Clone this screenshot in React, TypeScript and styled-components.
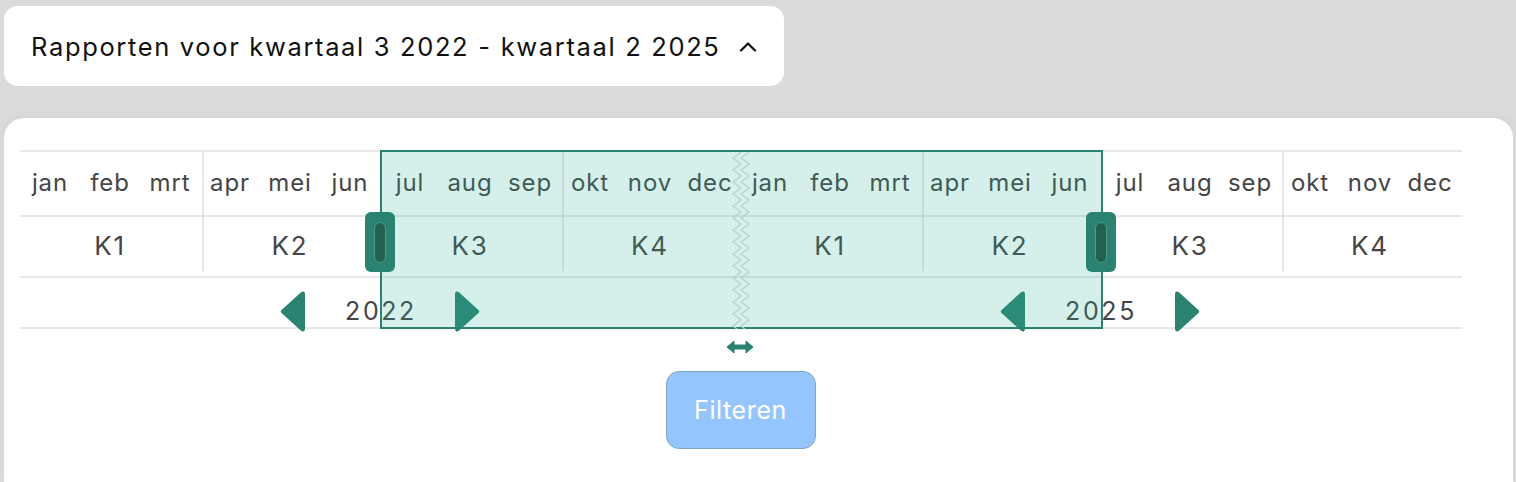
import styled, { createGlobalStyle } from 'styled-components';

const TEAL = '#2a8371';
const LINE = '#e7e7ec';
const TEXT = '#454545';

const GlobalStyle = createGlobalStyle`
  html, body { margin: 0; padding: 0; }
  body {
    background: #dbdbdd;
    font-family: Inter, "Noto Sans", sans-serif;
  }
`;

const Page = styled.div`
  height: 482px;
  box-sizing: border-box;
  padding: 6px 3px 0 4px;
  display: flex;
  flex-direction: column;
  overflow: hidden;
`;

const Trigger = styled.button`
  width: 780px;
  height: 80px;
  flex-shrink: 0;
  display: flex;
  align-items: center;
  gap: 18px;
  padding: 0 0 0 27px;
  border: none;
  border-radius: 14px;
  background: #fff;
  font-family: Inter, sans-serif;
  font-size: 25.5px;
  letter-spacing: 1.65px;
  color: #111;
  cursor: pointer;
`;

const Dash = styled.span`
  margin: 0 9px;
`;

const Panel = styled.div`
  flex: 1;
  margin-top: 32px;
  background: #fff;
  border-radius: 20px 20px 0 0;
  padding: 32px 0 0 16px;
  display: flex;
  flex-direction: column;
  align-items: flex-start;
  box-shadow: 0 -2px 10px rgba(0, 0, 0, 0.04);
`;

const Timeline = styled.div`
  position: relative;
  width: 1442px;
  border-top: 2px solid ${LINE};
`;

const Row = styled.div<{ $height: number }>`
  display: flex;
  height: ${(p) => p.$height}px;
  border-bottom: 2px solid ${LINE};
`;

const QuarterMonths = styled.div<{ $divider: boolean }>`
  width: 180px;
  display: flex;
  background: ${(p) =>
    p.$divider ? `linear-gradient(${LINE}, ${LINE}) 2px 0 / 2px 100% no-repeat` : 'none'};
`;

const Month = styled.span`
  width: 60px;
  display: flex;
  align-items: center;
  justify-content: center;
  padding-bottom: 3px;
  font-size: 24px;
  letter-spacing: 0.9px;
  color: ${TEXT};
`;

const QuarterCell = styled.div<{ $divider: boolean }>`
  width: 180px;
  display: flex;
  align-items: center;
  justify-content: center;
  padding-bottom: 2px;
  font-size: 26px;
  letter-spacing: 1.8px;
  color: ${TEXT};
  background: ${(p) =>
    p.$divider
      ? `linear-gradient(${LINE}, ${LINE}) 2px 0 / 2px calc(100% - 5px) no-repeat`
      : 'none'};
`;

const YearCell = styled.div`
  width: 720px;
  display: flex;
  align-items: center;
  justify-content: center;
  gap: 40px;
`;

const YearLabel = styled.span`
  font-size: 25px;
  letter-spacing: 2.6px;
  color: ${TEXT};
  padding-top: 16px;
  margin-right: -2px;
`;

const ArrowButton = styled.button`
  padding: 0;
  border: none;
  background: none;
  display: flex;
  margin-top: 18px;
  cursor: pointer;
`;

const Selection = styled.div`
  position: absolute;
  left: 360px;
  top: -2px;
  width: 723px;
  height: 179px;
  box-sizing: border-box;
  border: 2px solid ${TEAL};
  background: rgba(45, 180, 150, 0.2);
`;

const Handle = styled.div<{ $left: number }>`
  position: absolute;
  left: ${(p) => p.$left}px;
  top: 60px;
  width: 30px;
  height: 60px;
  box-sizing: border-box;
  border-radius: 6px;
  background: ${TEAL};
  padding: 10px 9px 9px;
  cursor: ew-resize;
`;

const HandleSlot = styled.div`
  height: 100%;
  box-sizing: border-box;
  border-radius: 6px;
  background: #22614f;
  border: 1px solid #4f9b88;
`;

const Break = styled.div`
  position: absolute;
  left: 711px;
  top: 0;
  width: 20px;
  height: 177px;
`;

const BreakArrow = styled.div`
  position: absolute;
  left: 706px;
  top: 188px;
  display: flex;
`;

const FilterButton = styled.button`
  align-self: center;
  margin: 42px 0 0 -52px;
  width: 150px;
  height: 78px;
  border-radius: 13px;
  border: 1.5px solid #7fa4c4;
  background: #94c6fd;
  color: #fff;
  font-family: Inter, sans-serif;
  font-size: 25px;
  letter-spacing: 0.6px;
  cursor: pointer;
`;

const months = ['jan', 'feb', 'mrt', 'apr', 'mei', 'jun', 'jul', 'aug', 'sep', 'okt', 'nov', 'dec'];
const quarters = ['K1', 'K2', 'K3', 'K4', 'K1', 'K2', 'K3', 'K4'];

const Chevron = () => (
  <svg width="18" height="11" viewBox="0 0 18 11">
    <path d="M2 9.5 L9 2.5 L16 9.5" fill="none" stroke="#111" strokeWidth="2.2" strokeLinecap="round" strokeLinejoin="round" />
  </svg>
);

const Arrow = ({ dir }: { dir: 'left' | 'right' }) => (
  <svg width="25" height="41" viewBox="0 0 25 41" style={{ transform: dir === 'right' ? 'scaleX(-1)' : undefined }}>
    <path
      d="M20.5 1.8 Q25 -1.5 25 4 L25 37 Q25 42.5 20.5 39.2 L1.8 22.3 Q-0.4 20.5 1.8 18.7 Z"
      fill={TEAL}
    />
  </svg>
);

const zig = (x0: number) => {
  const pts: string[] = [];
  for (let i = 0; i <= 30; i++) {
    pts.push(`${i % 2 === 0 ? x0 + 8 : x0},${i * 6}`);
  }
  return pts.join(' ');
};

const BreakLines = () => (
  <svg width="20" height="177" viewBox="0 0 20 177">
    <polyline points={zig(2)} fill="none" stroke="#b3d2ca" strokeWidth="1.2" />
    <polyline points={zig(10)} fill="none" stroke="#b3d2ca" strokeWidth="1.2" />
  </svg>
);

const DoubleArrow = () => (
  <svg width="28" height="14" viewBox="0 0 28 14">
    <path d="M1 7 L8 1 L8 5 L20 5 L20 1 L27 7 L20 13 L20 9 L8 9 L8 13 Z" fill={TEAL} strokeLinejoin="round" stroke={TEAL} strokeWidth="1" />
  </svg>
);

export default function App() {
  return (
    <>
      <GlobalStyle />
      <Page>
        <Trigger>
          <span>
            Rapporten voor kwartaal 3 2022<Dash>-</Dash>kwartaal 2 2025
          </span>
          <Chevron />
        </Trigger>
        <Panel>
          <Timeline>
            <Row $height={63}>
              {quarters.map((_, q) => (
                <QuarterMonths key={q} $divider={q % 2 === 1}>
                  {months.slice((q % 4) * 3, (q % 4) * 3 + 3).map((m) => (
                    <Month key={m}>{m}</Month>
                  ))}
                </QuarterMonths>
              ))}
            </Row>
            <Row $height={59}>
              {quarters.map((k, q) => (
                <QuarterCell key={q} $divider={q % 2 === 1}>
                  {k}
                </QuarterCell>
              ))}
            </Row>
            <Row $height={49}>
              {['2022', '2025'].map((y) => (
                <YearCell key={y}>
                  <ArrowButton>
                    <Arrow dir="left" />
                  </ArrowButton>
                  <YearLabel>{y}</YearLabel>
                  <ArrowButton>
                    <Arrow dir="right" />
                  </ArrowButton>
                </YearCell>
              ))}
            </Row>
            <Selection />
            <Break>
              <BreakLines />
            </Break>
            <Handle $left={345}>
              <HandleSlot />
            </Handle>
            <Handle $left={1066}>
              <HandleSlot />
            </Handle>
            <BreakArrow>
              <DoubleArrow />
            </BreakArrow>
          </Timeline>
          <FilterButton>Filteren</FilterButton>
        </Panel>
      </Page>
    </>
  );
}
